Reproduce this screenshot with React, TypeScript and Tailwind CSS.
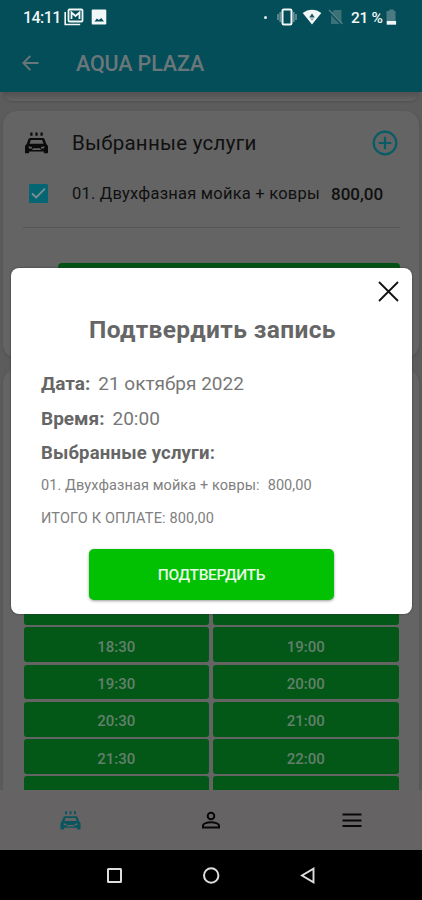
import React from "react";

const slots = [
  ["17:30", "18:00"],
  ["18:30", "19:00"],
  ["19:30", "20:00"],
  ["20:30", "21:00"],
  ["21:30", "22:00"],
  ["22:30", "23:00"],
];

function CarWash({ className }: { className: string }) {
  return (
    <svg viewBox="0 0 24 24" className={className} fill="currentColor">
      <path
        fillRule="evenodd"
        d="M5.600 7h12.800c.8 0 1.300.4 1.600 1.100l1.700 4.600 1.800 2.300v6.200c0 .6-.4 1-1 1h-2.200c-.6 0-1-.4-1-1v-.8H4.700v.8c0 .6-.4 1-1 1H1.500c-.6 0-1-.4-1-1V15l1.800-2.300L4 8.100C4.300 7.400 4.800 7 5.600 7zm.7 2-1.300 3.700h14L17.700 9zM4.200 15.200v2l3.200.6v-1.700zm15.600 0-3.200.9v1.700l3.200-.6zM8.600 17.200l-1.200 1.700h9.200l-1.200-1.700z"
      />
      <path d="M5.800 1.500h2.200v3.300H5.800zM10.900 1.500h2.200v3.300h-2.200zM16 1.500h2.200v3.300H16z" />
    </svg>
  );
}

function StatusBar() {
  return (
    <div className="flex h-[34px] items-center pl-[23px] text-[16px] font-medium leading-none text-[#f1f6f6]">
      <span className="w-[40px] whitespace-nowrap pt-[2px] tracking-[-0.550px]">14:11</span>
      <svg className="ml-px h-[18px] w-[20px]" viewBox="0 0 20 18">
        <path d="M1.200 4v12.500h15" fill="none" stroke="currentColor" strokeWidth="1.600" />
        <rect x="4.500" y="1.500" width="14" height="12" rx="1" fill="none" stroke="currentColor" strokeWidth="1.800" />
        <path d="M7.500 11V4.500l4 3.500 4-3.500V11" fill="none" stroke="currentColor" strokeWidth="1.800" />
      </svg>
      <svg className="ml-[7px] h-[16px] w-[16px]" viewBox="0 0 16 16">
        <path fillRule="evenodd" fill="currentColor" d="M2 .5h12c.8 0 1.300.5 1.300 1.300v12.400c0 .8-.5 1.300-1.300 1.300H2c-.8 0-1.300-.5-1.300-1.300V1.800C.7 1 1.200.5 2 .5zm1.500 12h9.500L10.300 9 7.800 11 5.900 9.500z" />
      </svg>
      <span className="ml-[157px] h-[3px] w-[3px] rounded-full bg-[#e3eded]" />
      <svg className="ml-[10px] h-[18px] w-[20px]" viewBox="0 0 20 18">
        <path d="M1 6v6M3.200 4v10M19 6v6M16.800 4v10" stroke="#6d9299" strokeWidth="1.600" />
        <rect x="5.500" y="1.500" width="9" height="15" rx="1.200" fill="none" stroke="currentColor" strokeWidth="2" />
      </svg>
      <svg className="ml-[5px] h-[16px] w-[20px]" viewBox="0 0 20 16">
        <path d="M.7 4C6-.5 14-.5 19.300 4L10 15.500z" fill="currentColor" />
        <path d="m10 4.500 2.800 4H7.200z" fill="#20545c" />
        <path d="m10 11.500-1.800-2h3.600z" fill="#6d9299" />
      </svg>
      <svg className="ml-[6px] h-[16px] w-[15px]" viewBox="0 0 15 16">
        <path d="M6 1h7.500v14H3V5z" fill="#3c7178" />
        <path d="M.5 1.500 14 15.500" stroke="#034e59" strokeWidth="2.600" />
        <path d="M1 1 14.500 15" stroke="#5d858b" strokeWidth="1.200" />
      </svg>
      <span className="ml-[8px] w-[34px] whitespace-nowrap pt-[3px] text-[15.500px] tracking-[-0.300px]">21 %</span>
      <svg className="ml-px h-[17px] w-[11px]" viewBox="0 0 11 17">
        <path d="M3.200.5h4.600V2h1.700v10.500h-9V2h2.700z" fill="#4b7a82" />
        <path d="M.7 12h9.400v3.700H.7z" fill="currentColor" />
      </svg>
    </div>
  );
}

function TopBar() {
  return (
    <header className="h-[92px] shrink-0 bg-[#034e59]">
      <StatusBar />
      <div className="flex h-[58px] items-center pl-[22px] text-[#6b7679]">
        <svg className="h-[16px] w-[17px]" viewBox="0 0 17 16" fill="none" stroke="currentColor" strokeWidth="1.800">
          <path d="M16.500 8H1.300M8.300 1 1.300 8l7 7" />
        </svg>
        <h1 className="ml-[37px] whitespace-nowrap pt-[2px] text-[21.500px] font-medium leading-none tracking-[-0.150px]">AQUA PLAZA</h1>
      </div>
    </header>
  );
}

function ServicesCard() {
  return (
    <section className="mx-[3px] mt-[10px] h-[247px] shrink-0 rounded-[14px] bg-[#646464] pl-[20px] pr-[19px] shadow-[0_1px_3px_#505050]">
      <div className="flex h-[63px] items-center">
        <CarWash className="ml-px h-[24px] w-[25px] text-[#0b0b0b]" />
        <h2 className="ml-[23px] w-[200px] whitespace-nowrap pt-[2px] text-[20.500px] leading-none tracking-[0.270px] text-[#101010]">Выбранные услуги</h2>
        <svg className="ml-auto mr-[2px] h-[26px] w-[26px] text-[#075c66]" viewBox="0 0 26 26" fill="none" stroke="currentColor" strokeWidth="2.200">
          <circle cx="13" cy="13" r="11.300" />
          <path d="M13 6.700v12.600M6.700 13h12.600" />
        </svg>
      </div>
      <div className="flex h-[54px] items-start border-b border-[#555] pt-[9px]">
        <svg className="ml-[6px] mt-px h-[19px] w-[19px]" viewBox="0 0 19 19">
          <rect width="19" height="19" rx="1.500" fill="#056572" />
          <path d="m3 9.500 4.200 4L16 4.700" fill="none" stroke="#7c8f91" strokeWidth="1.800" />
        </svg>
        <span className="ml-[24px] w-[259px] whitespace-nowrap text-[16.500px] leading-[22px] tracking-[0.220px] text-[#101010]">01. Двухфазная мойка + ковры</span>
        <span className="whitespace-nowrap text-[17px] font-medium leading-[22px] text-[#101010]">800,00</span>
      </div>
      <div className="ml-[35px] mt-[35px] h-[50px] rounded-[4px] bg-[#035215]" />
    </section>
  );
}

function TimesCard() {
  return (
    <section className="mx-[3px] mt-[11px] h-[440px] shrink-0 rounded-t-[14px] bg-[#646464] px-[20.500px] pt-[221px] shadow-[0_1px_3px_#505050]">
      <div className="grid grid-cols-2 gap-x-[4px] gap-y-[2.500px]">
        {slots.flat().map((time) => (
          <div key={time} className="flex h-[34.800px] items-center justify-center rounded-[3px] bg-[#035818] pt-[5px] text-[15px] font-medium leading-none text-[#62806a]">
            {time}
          </div>
        ))}
      </div>
    </section>
  );
}

function BottomBar() {
  return (
    <nav className="grid h-[60px] shrink-0 grid-cols-3 items-center justify-items-center bg-[#666364] text-[#080808]">
      <CarWash className="h-[21px] w-[21px] text-[#0a555e]" />
      <svg className="h-[20px] w-[20px]" viewBox="0 0 20 20" fill="none" stroke="currentColor" strokeWidth="2">
        <circle cx="10" cy="6" r="3.300" />
        <path d="M2 17.500v-1.700c0-2.300 4.500-3.500 8-3.500s8 1.200 8 3.500v1.700z" />
      </svg>
      <svg className="h-[14px] w-[20px]" viewBox="0 0 20 14" stroke="currentColor" strokeWidth="1.900">
        <path d="M.5 1.500h19M.5 7.500h19M.5 13h19" />
      </svg>
    </nav>
  );
}

function SystemBar() {
  return (
    <div className="flex h-[50px] shrink-0 items-center bg-black pl-[106px] text-[#dedede]">
      <svg className="h-[17px] w-[17px]" viewBox="0 0 17 17" fill="none" stroke="currentColor" strokeWidth="2">
        <rect x="2" y="2" width="13" height="13" rx=".5" />
      </svg>
      <svg className="ml-[80px] h-[17px] w-[17px]" viewBox="0 0 17 17" fill="none" stroke="currentColor" strokeWidth="2">
        <circle cx="8.200" cy="8.500" r="7.200" />
      </svg>
      <svg className="ml-[80px] h-[17px] w-[15px]" viewBox="0 0 15 17" fill="none" stroke="currentColor" strokeWidth="1.900">
        <path d="M13.500 1.700v13.600L2 8.500z" />
      </svg>
    </div>
  );
}

function ConfirmDialog() {
  return (
    <div role="dialog" className="absolute left-[11px] top-[268px] flex h-[346px] w-[401px] flex-col rounded-[8px] bg-white pl-[30px] text-[#666] shadow-[0_0_2px_#333]">
      <button aria-label="Закрыть" className="ml-auto mr-[13px] mt-[13px] h-[21px] w-[21px] text-[#111]">
        <svg viewBox="0 0 21 21" fill="none" stroke="currentColor" strokeWidth="1.800">
          <path d="m1 1 19 19M20 1 1 20" />
        </svg>
      </button>
      <h2 className="ml-[48px] mt-[13px] whitespace-nowrap text-[24.500px] font-bold leading-[30px] tracking-[0.380px]">Подтвердить запись</h2>
      <p className="mt-[27px] whitespace-nowrap text-[19px] leading-[24px] text-[#777]">
        <b className="mr-[8px] font-bold text-[#666]">Дата:</b>21 октября 2022
      </p>
      <p className="mt-[11px] whitespace-nowrap text-[19px] leading-[24px] text-[#777]">
        <b className="mr-[8px] font-bold text-[#666]">Время:</b>20:00
      </p>
      <p className="mt-[10px] whitespace-nowrap text-[18.500px] font-bold leading-[24px] tracking-[0.200px]">Выбранные услуги:</p>
      <p className="mt-[11px] whitespace-nowrap text-[14.500px] leading-[20px] tracking-[0.090px] text-[#808080]">
        <span className="mr-[8px]">01. Двухфазная мойка + ковры:</span>800,00
      </p>
      <p className="mt-[13px] whitespace-nowrap text-[14.500px] leading-[20px] tracking-[0.160px] text-[#808080]">ИТОГО К ОПЛАТЕ: 800,00</p>
      <button className="ml-[48px] mt-[20px] h-[51px] w-[245px] rounded-[5px] bg-[#02c102] pt-[2px] text-[15.500px] font-medium leading-none tracking-[-0.350px] text-[#e8fbe8] shadow-[0_1px_3px_#999]">ПОДТВЕРДИТЬ</button>
    </div>
  );
}

export default function App() {
  return (
    <div className="relative flex h-[900px] w-[422px] flex-col overflow-hidden bg-[#5c5c5c] font-['Roboto',sans-serif]">
      <TopBar />
      <main className="flex h-[698px] shrink-0 flex-col overflow-hidden">
        <div className="mx-[3px] h-[9px] shrink-0 rounded-b-[10px] bg-linear-to-b from-[#515151] to-[#636363] shadow-[0_1px_2px_#505050]" />
        <ServicesCard />
        <TimesCard />
      </main>
      <BottomBar />
      <SystemBar />
      <ConfirmDialog />
    </div>
  );
}
